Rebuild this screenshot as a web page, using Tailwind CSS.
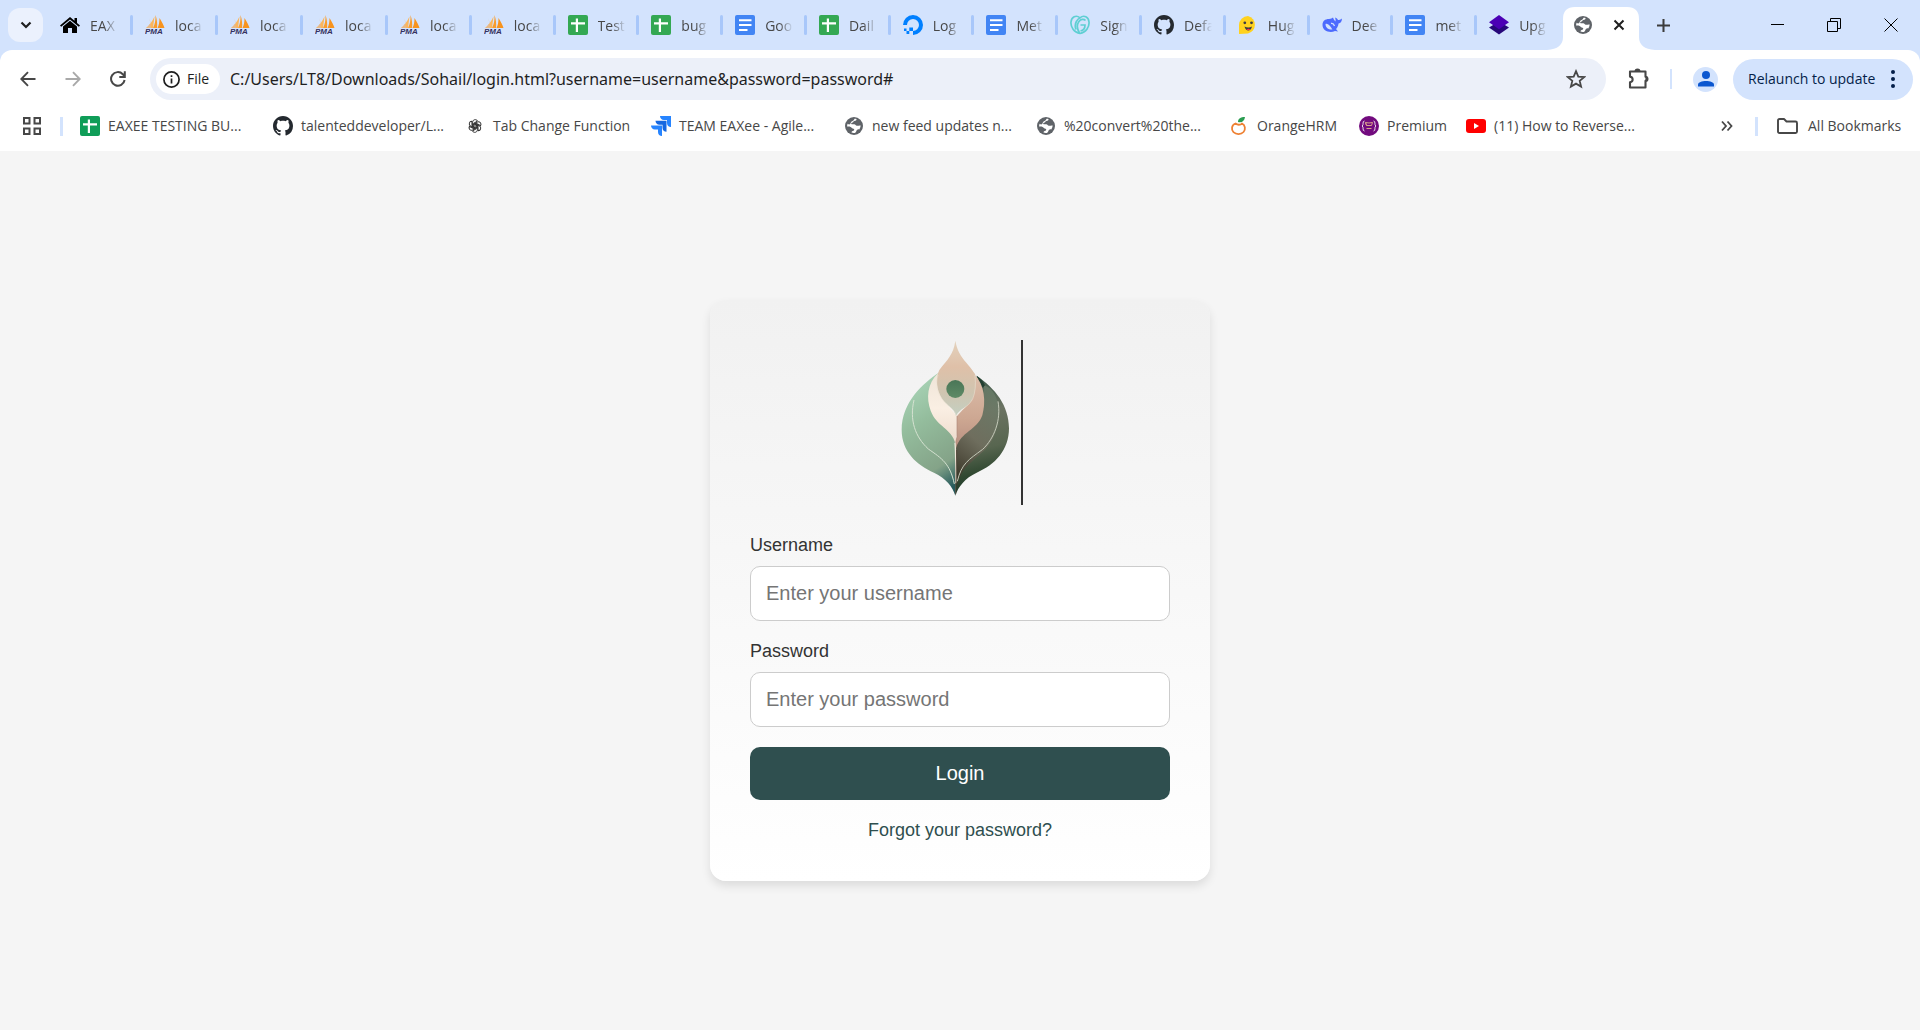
<!DOCTYPE html>
<html lang="en">
<head>
<meta charset="utf-8">
<title>Login</title>
<script src="https://cdn.jsdelivr.net/npm/@tailwindcss/browser@4"></script>
</head>
<body class="flex min-h-screen flex-col bg-[#f5f5f5] font-['Open_Sans','Noto_Sans',sans-serif] text-[#474747]">

<svg class="hidden" aria-hidden="true">
  <symbol id="pma" viewBox="0 0 20 20">
    <path d="M9.500 1.500 8 13H1C4 10.500 7 7 9.500 1.500z" fill="#fbb65c"/>
    <path d="M4.500 3 5.500 8 2 13H6z" fill="#e5b98b"/>
    <path d="M10.500 0c1.500 4 2 9 1.500 13H8C10 9 10.700 5 10.500 0z" fill="#f89c2d"/>
    <path d="M14.500 3c2 3 4 7 5 10h-7c1.500-3 2-6 2-10z" fill="#f7931e"/>
    <text x="0" y="19" class="font-['Liberation_Sans',sans-serif] text-[8px] font-bold italic" fill="#34315f">PMA</text>
  </symbol>
  <symbol id="sheet" viewBox="0 0 20 20">
    <rect width="20" height="20" rx="2" fill="currentColor"/>
    <path d="M8.900 3.500v13.500M3 8.400h14" stroke="#fff" stroke-width="2.200"/>
  </symbol>
  <symbol id="doc" viewBox="0 0 20 20">
    <rect width="20" height="20" rx="2" fill="#4285f4"/>
    <path d="M4 5.300h12.500M4 10h12.500M4 15h8.500" stroke="#fff" stroke-width="2"/>
  </symbol>
  <symbol id="github" viewBox="0 0 16 16">
    <path fill="#24292f" fill-rule="evenodd" d="M8 0C3.580 0 0 3.580 0 8c0 3.540 2.290 6.530 5.470 7.590.4.070.55-.17.55-.38 0-.19-.01-.82-.01-1.490-2.010.37-2.530-.49-2.690-.94-.09-.23-.48-.94-.82-1.130-.28-.15-.68-.52-.01-.53.63-.01 1.080.58 1.230.82.72 1.210 1.870.87 2.330.66.07-.52.28-.87.51-1.070-1.780-.2-3.640-.89-3.640-3.950 0-.87.31-1.590.82-2.150-.08-.2-.36-1.020.08-2.120 0 0 .67-.21 2.200.82.64-.18 1.320-.27 2-.27s1.360.09 2 .27c1.530-1.040 2.200-.82 2.200-.82.44 1.100.16 1.920.08 2.120.51.56.82 1.270.82 2.150 0 3.070-1.870 3.750-3.650 3.950.29.25.54.73.54 1.480 0 1.070-.01 1.930-.01 2.200 0 .21.15.46.55.38A8.010 8.010 0 0 0 16 8c0-4.420-3.580-8-8-8z"/>
  </symbol>
  <symbol id="globe" viewBox="0 0 20 20">
    <circle cx="10" cy="10" r="9" fill="#5f6368"/>
    <path d="M12.500 2.900c.3 1.400-.8 1.800-2.300 2-.9.100-.7 1.200-1.600 1.500-1 .3-1.700.600-1.300 1.500.4.800 1.800.300 2.900.3 1.400 0 1.500 1.200 2.600 1.500 1.100.3 2.100-.4 3.900-.1-.1 1.500-.6 2.700-1.400 3.800-.8-.2-1.700-.2-2.400.6-.8.900-.4 2.300-2 2.900-1.300.3-2.600.1-3.400-.3.1-1.200.9-1.700 2-1.900.9-.2 1-1.700 0-1.900-1.400-.2-1.800-1.300-2.900-1.900-1.100-.6-2.300-.4-3.500-.4 0-1.200.2-2 .5-2.800.8.300 1.200.9 2.200.6 1-.4.700-1.700 1.500-2.500.9-.8 2.700-.8 3.200-3 .800.0 1.400.0 2 .1z" fill="#fff"/>
  </symbol>
</svg>

<header class="h-[151px] shrink-0 bg-[#d3e3fd]">
  <div class="flex h-[50px] items-end">
    <div class="flex h-[50px] w-[46px] shrink-0 items-center pl-2">
      <button aria-label="Search tabs" class="flex h-[34px] w-[35px] items-center justify-center rounded-xl bg-[#ebf1fd]">
        <svg class="h-3 w-3" viewBox="0 0 12 12" fill="none" stroke="#1f1f1f" stroke-width="2.200"><path d="M1.500 3.500 6 8l4.500-4.500"/></svg>
      </button>
    </div>
    <nav id="tabs" aria-label="Tabs" class="flex h-[50px] w-[1513px] shrink-0 text-sm"></nav>
    <div class="relative flex h-[43px] w-[84px] shrink-0 items-center justify-between pr-[18px] pb-[7px] pl-[14px]">
      <svg class="absolute inset-0 h-full w-full overflow-visible" viewBox="0 0 84 43" preserveAspectRatio="none"><path d="M-12 43Q4 42 4 30V12Q4 0 16 0H68Q80 0 80 12V30Q80 42 96 43z" fill="#fff"/></svg>
      <svg class="relative h-5 w-5"><use href="#globe"/></svg>
      <button aria-label="Close tab" class="relative"><svg class="h-3 w-3" viewBox="0 0 12 12" stroke="#1f1f1f" stroke-width="2"><path d="m1.500 1.500 9 9M10.500 1.500l-9 9"/></svg></button>
    </div>
    <button aria-label="New tab" class="mb-[18px] ml-[14px]"><svg class="h-[13px] w-[13px]" viewBox="0 0 14 14" stroke="#3c3c3c" stroke-width="2.200"><path d="M7 0v14M0 7h14"/></svg></button>
    <div class="ml-auto flex h-[50px] items-center gap-[43px] pr-[22px]">
      <button aria-label="Minimize"><svg class="h-[14px] w-[14px]" viewBox="0 0 14 14" stroke="#000"><path d="M1 6.500h13"/></svg></button>
      <button aria-label="Restore"><svg class="h-[14px] w-[14px]" viewBox="0 0 14 14" fill="none" stroke="#000"><path d="M.5 3.500h10v10H.5zM3.500 3.500V.5h10v10h-3"/></svg></button>
      <button aria-label="Close"><svg class="h-[14px] w-[14px]" viewBox="0 0 14 14" stroke="#000"><path d="m.5.5 13 13M13.500.5l-13 13"/></svg></button>
    </div>
  </div>

  <div class="h-[101px] rounded-t-xl bg-white">
    <div class="flex h-[58px] items-center pr-[7px] pl-5">
      <button aria-label="Back"><svg class="h-4 w-4" viewBox="0 0 16 16" fill="none" stroke="#474747" stroke-width="1.900"><path d="M15.500 8H1.500M8 1.200 1.300 8 8 14.800"/></svg></button>
      <button aria-label="Forward" class="ml-[29px]"><svg class="h-4 w-4" viewBox="0 0 16 16" fill="none" stroke="#a9a9a9" stroke-width="1.900"><path d="M.5 8h14M8 1.200 14.700 8 8 14.800"/></svg></button>
      <button aria-label="Reload" class="ml-[29px]"><svg class="h-4 w-4" viewBox="0 0 16 16" fill="none" stroke="#474747" stroke-width="2"><path d="M14.600 9A6.800 6.800 0 1 1 12.800 3.200L14.500 5M14.800.3V6H9.300"/></svg></button>
      <div class="ml-6 flex h-[42px] flex-1 items-center rounded-full bg-[#ecf0f9] pr-5 pl-[6px]">
        <button class="flex h-[30px] w-16 shrink-0 items-center gap-[7px] rounded-full bg-white pl-[7px] text-sm font-medium text-[#1f1f1f]">
          <svg class="h-[17px] w-[17px]" viewBox="0 0 17 17" fill="none" stroke="#1f1f1f" stroke-width="1.700"><circle cx="8.500" cy="8.500" r="7.600"/><path d="M8.500 7.500v5M8.500 4.300v1.700"/></svg>File
        </button>
        <input aria-label="Address" class="ml-[10px] h-8 min-w-0 flex-1 bg-transparent font-['Noto_Sans',sans-serif] text-base text-[#1f1f1f] outline-none" value="C:/Users/LT8/Downloads/Sohail/login.html?username=username&amp;password=password#">
        <button aria-label="Bookmark this page"><svg class="h-5 w-5" viewBox="0 0 20 20" fill="none" stroke="#474747" stroke-width="1.800"><path d="m10 2.200 2.300 5.400 5.900.5-4.500 3.800 1.400 5.700-5.100-3-5.100 3 1.400-5.700L1.800 8.100l5.900-.5z"/></svg></button>
      </div>
      <button aria-label="Extensions" class="ml-[21px]"><svg class="h-[22px] w-[22px]" viewBox="0 0 22 22"><path d="M3 3.500h15.500v5.200c2 .2 2 4 0 4.200v6.600H3v-5.200c3.500-.8 3.500-5 0-5.700z" fill="none" stroke="#474747" stroke-width="2.100" stroke-linejoin="round"/><path d="M7.500 3.500a3 3 0 0 1 6 0zM18.500 8a3 3 0 0 1 0 6z" fill="#474747"/></svg></button>
      <span class="ml-[21px] h-5 w-[2px] bg-[#d3e3fd]"></span>
      <button aria-label="Profile" class="ml-[21px] flex h-[25px] w-[25px] items-center justify-center rounded-full bg-[#d3e3fd]"><svg class="h-4 w-4" viewBox="0 0 16 16" fill="#0b57d0"><circle cx="8" cy="4" r="4"/><path d="M0 15.500v-2C0 8.800 16 8.800 16 13.500v2z"/></svg></button>
      <button class="ml-[15px] flex h-[41px] w-[180px] items-center justify-between rounded-full bg-[#d3e3fd] pr-[18px] pl-[15px] text-sm font-normal whitespace-nowrap text-[#041e49]">
        Relaunch to update
        <svg class="h-[18px] w-1" viewBox="0 0 4 18" fill="#041e49"><circle cx="2" cy="2" r="2"/><circle cx="2" cy="9" r="2"/><circle cx="2" cy="16" r="2"/></svg>
      </button>
    </div>

    <nav aria-label="Bookmarks" class="flex h-9 items-center pr-[18px] pl-[23px] text-sm whitespace-nowrap">
      <button aria-label="Apps"><svg class="h-[18px] w-[18px]" viewBox="0 0 18 18" fill="none" stroke="#474747" stroke-width="2"><path d="M1 1h5.500v5.500H1zM11.500 1H17v5.500h-5.500zM1 11.500h5.500V17H1zM11.500 11.500H17V17h-5.500z"/></svg></button>
      <span class="ml-[19px] h-[19px] w-[3px] bg-[#d3e3fd]"></span>
      <a href="#" class="ml-[17px] flex w-[193px] items-center gap-2"><svg class="h-5 w-5 shrink-0 text-[#0f9d58]"><use href="#sheet"/></svg>EAXEE TESTING BU...</a>
      <a href="#" class="flex w-[192px] items-center gap-2"><svg class="h-5 w-5 shrink-0"><use href="#github"/></svg>talenteddeveloper/L...</a>
      <a href="#" class="flex w-[186px] items-center gap-2"><svg class="h-5 w-5 shrink-0" viewBox="-2 -2 24 24" fill="none" stroke="#333" stroke-width="1.200"><path id="loop" d="M7.200 12V5.500C7.200 2.200 11.500 1.200 13 4L8.500 6.700V11"/><use href="#loop" transform="rotate(60 10 10)"/><use href="#loop" transform="rotate(120 10 10)"/><use href="#loop" transform="rotate(180 10 10)"/><use href="#loop" transform="rotate(240 10 10)"/><use href="#loop" transform="rotate(300 10 10)"/></svg>Tab Change Function</a>
      <a href="#" class="flex w-[193px] items-center gap-2"><svg class="h-5 w-5 shrink-0" viewBox="0 0 20 20"><path d="M9 0h11v11c-2.300 0-4-1.500-4-4V4h-3C10.500 4 9 2.300 9 0z" fill="#2684ff"/><path d="M4.500 4.800h11v11c-2.300 0-4-1.500-4-4v-3h-3c-2.500 0-4-1.700-4-4z" fill="#1668e0"/><path d="M0 9.500h11V20c-2.300 0-4-1.500-4-4v-2.500H4c-2.500 0-4-1.700-4-4z" fill="#2684ff"/></svg>TEAM EAXee - Agile...</a>
      <a href="#" class="flex w-[192px] items-center gap-2"><svg class="h-5 w-5 shrink-0"><use href="#globe"/></svg>new feed updates n...</a>
      <a href="#" class="flex w-[193px] items-center gap-2"><svg class="h-5 w-5 shrink-0"><use href="#globe"/></svg>%20convert%20the...</a>
      <a href="#" class="flex w-[130px] items-center gap-2"><svg class="h-5 w-5 shrink-0" viewBox="0 0 20 20"><path d="M6.500 7.500C2.500 9 2 13.500 4.500 16.200c2.800 2.600 7.500 2.400 10-.2 2.300-2.800 1.800-6.800-1.500-8.500-1.500 1.600-4.500 1.700-6.500 0z" fill="none" stroke="#ee8133" stroke-width="1.800"/><path d="M9 6c0-3.500 2.500-5 7-5-.5 4-3 6-7 5z" fill="#2a9d51"/></svg>OrangeHRM</a>
      <a href="#" class="flex w-[107px] items-center gap-2"><svg class="h-5 w-5 shrink-0" viewBox="0 0 20 20"><circle cx="10" cy="10" r="10" fill="#720b7e"/><path d="M5.500 5C3 5 5 9 3.200 10 5 11 3 15 5.500 15M14.500 5C17 5 15 9 16.800 10 15 11 17 15 14.500 15" fill="none" stroke="#eadbea"/><path d="m6.500 6.500 3.500.5 3.500-.5-1 3h-5zM7.500 9.500l-1-3M7.500 12.500h5" fill="none" stroke="#d9a08a"/></svg>Premium</a>
      <a href="#" class="flex items-center gap-2"><svg class="h-5 w-5 shrink-0" viewBox="0 0 20 20"><rect y="3" width="20" height="14" rx="3" fill="#f00"/><path d="m8 7 5 3-5 3z" fill="#fff"/></svg>(11) How to Reverse...</a>
      <button aria-label="More bookmarks" class="ml-auto"><svg class="h-3 w-3" viewBox="0 0 12 12" fill="none" stroke="#474747" stroke-width="1.800"><path d="m1 1.500 4 4.500-4 4.500M6.500 1.500l4 4.500-4 4.500"/></svg></button>
      <span class="ml-[22px] h-[19px] w-[3px] bg-[#d3e3fd]"></span>
      <a href="#" class="ml-[19px] flex w-[125px] items-center gap-[10px]"><svg class="h-4 w-[21px] shrink-0" viewBox="0 0 21 16" fill="none" stroke="#474747" stroke-width="1.900" stroke-linejoin="round"><path d="M1 2.500Q1 1 2.500 1H7l2.500 2.500h9Q20 3.500 20 5v8.500q0 1.500-1.500 1.500h-16Q1 15 1 13.500z"/></svg>All Bookmarks</a>
    </nav>
  </div>
</header>

<main class="flex flex-1 items-center justify-center font-['Liberation_Sans',Arial,sans-serif]">
  <form class="flex w-full max-w-[500px] flex-col rounded-2xl bg-linear-to-b from-[#f1f1f1] to-white p-10 text-lg/[21px] text-[#333] shadow-[0_5px_10px_rgba(0,0,0,0.1)]">
    <div class="mb-[30px] self-center border-r-2 border-[#333]">
      <svg class="block h-[165px] w-[124px]" viewBox="111 60 372 495" role="img" aria-label="Logo">
        <defs>
          <linearGradient id="gl" x1=".4" y1="0" x2=".7" y2="1"><stop offset="0" stop-color="#a9d4b7"/><stop offset=".35" stop-color="#94bd9d"/><stop offset=".78" stop-color="#84a388"/><stop offset="1" stop-color="#265a5c"/></linearGradient>
          <linearGradient id="gr" x1=".5" y1="0" x2=".6" y2="1"><stop offset="0" stop-color="#3c5948"/><stop offset=".3" stop-color="#6b7362"/><stop offset=".6" stop-color="#586650"/><stop offset=".8" stop-color="#304831"/><stop offset="1" stop-color="#17372b"/></linearGradient>
          <linearGradient id="gi" x1=".7" y1="0" x2=".3" y2="1"><stop offset="0" stop-color="#6a7d69"/><stop offset=".55" stop-color="#736f60"/><stop offset="1" stop-color="#3e3428"/></linearGradient>
          <linearGradient id="gt" x1="0" y1="0" x2="0" y2="1"><stop offset="0" stop-color="#e3d2bd"/><stop offset=".35" stop-color="#dfc0a8"/><stop offset=".7" stop-color="#cfc5b1"/><stop offset="1" stop-color="#c4d0c2"/></linearGradient>
          <linearGradient id="gc" x1="0" y1="0" x2="0" y2="1"><stop offset="0" stop-color="#efe5d8"/><stop offset=".5" stop-color="#faefe3"/><stop offset="1" stop-color="#eedbcd"/></linearGradient>
          <linearGradient id="gp" x1="0" y1="0" x2="0" y2="1"><stop offset="0" stop-color="#ddbfab"/><stop offset=".6" stop-color="#cda792"/><stop offset="1" stop-color="#b88f80"/></linearGradient>
          <linearGradient id="gd" x1="0" y1="0" x2="0" y2="1"><stop offset="0" stop-color="#4a7657"/><stop offset="1" stop-color="#5e8a66"/></linearGradient>
        </defs>
        <path d="M236 158C190 190 125 245 125 330C125 395 170 435 222 458C258 475 278 500 286 527L290 370L236 250z" fill="url(#gl)"/>
        <path d="M350 167C405 205 447 255 447 325C447 390 405 435 350 458C315 474 295 500 286 527L288 370L372 260z" fill="url(#gr)"/>
        <path d="M372 195C402 205 417 240 416 280C412 365 375 390 335 425C312 445 300 460 290 500L289 372L365 290z" fill="url(#gi)" opacity=".8"/>
        <path d="M349 167Q366 176 375 196L368 203Q360 184 349 167z" fill="#223f31"/>
        <path d="M234 160C202 190 198 235 212 272C230 320 275 325 286 370Q292 362 292 290L250 240z" fill="url(#gc)"/>
        <path d="M342 162C375 195 378 245 367 286C352 330 302 335 288 385Q286 360 291 352V288L335 240z" fill="url(#gp)"/>
        <path d="M286 62C280 105 262 118 238 150C225 175 230 210 246 236C260 258 282 262 288 288C300 264 325 264 338 235C350 205 349 180 345 162C320 122 296 115 286 62z" fill="url(#gt)"/>
        <path d="M234 165C225 195 233 222 248 239C262 258 284 267 289 288C300 268 325 262 338 237C346 218 348 195 345 166" fill="none" stroke="#eee2d3" stroke-width="2" opacity=".8"/>
        <path d="M291 288V350Q286 366 287 382" fill="none" stroke="#b18a78" stroke-width="2"/>
        <path d="M285 368Q288 400 287 490" fill="none" stroke="#efe7da" stroke-width="4"/>
        <path d="M290 390L287 522" fill="none" stroke="#4a3a2d" stroke-width="2"/>
        <path d="M162 240C148 300 165 350 205 387C245 415 270 430 283 492" fill="none" stroke="#d5e2d1" stroke-width="3"/>
        <path d="M414 244C424 300 403 355 368 388C325 420 305 430 292 484" fill="none" stroke="#c3c9b8" stroke-width="3"/>
        <circle cx="286" cy="207" r="27" fill="url(#gd)"/>
      </svg>
    </div>
    <label for="username" class="mb-[10px]">Username</label>
    <input id="username" name="username" placeholder="Enter your username" class="mb-5 h-[55px] rounded-[10px] border border-[#ccc] bg-white px-[15px] text-xl placeholder:text-[#757575]">
    <label for="password" class="mb-[10px]">Password</label>
    <input id="password" name="password" type="password" placeholder="Enter your password" class="mb-5 h-[55px] rounded-[10px] border border-[#ccc] bg-white px-[15px] text-xl placeholder:text-[#757575]">
    <button class="mb-5 h-[53px] rounded-[10px] bg-[#2f4f4f] pb-[2px] text-xl text-white">Login</button>
    <a href="#" class="self-center text-[#2f4f4f]">Forgot your password?</a>
  </form>
</main>

<script>
  const use = (id, cls = '') => `<svg class="h-5 w-5 shrink-0 ${cls}"><use href="#${id}"/></svg>`;
  const svg = (body) => `<svg class="h-5 w-5 shrink-0" viewBox="0 0 20 20">${body}</svg>`;
  const pma = use('pma'), sheet = use('sheet', 'text-[#34a853]'), doc = use('doc');
  const tabs = [
    [svg('<path d="M10 2 0 10.500l1.200 1.300L10 4.400l8.800 7.400 1.200-1.300-3-2.600V3h-2.500v2.800z"/><path d="M3 11.500 10 5.700l7 5.800V18h-5v-5H8v5H3z"/>'), 'EAX'],
    [pma, 'loca'], [pma, 'loca'], [pma, 'loca'], [pma, 'loca'], [pma, 'loca'],
    [sheet, 'Test'], [sheet, 'bug'], [doc, 'Goo'], [sheet, 'Dail'],
    [svg('<path d="M10 18a8 8 0 1 0-8-8" fill="none" stroke="#0080ff" stroke-width="4"/><path d="M6.300 12.500H10V16H6.300zM3.500 16h2.800v3H3.500zM1 13.500h2.500V16H1z" fill="#0080ff"/>'), 'Log'],
    [doc, 'Met'],
    [svg('<path d="M10 18.500C4 17.500.5 12 1 7c.4-5 5-7.500 9-4.200 4-3.300 8.600-.8 9 4.200.5 5-3 10.500-9 11.500zM6 14.500C3.500 8 8 3.500 10.500 2.800M9.500 18C3.500 8 12 1.500 15.500 5.500M10.500 10H15c0 3.500-2 5.500-4.500 6" fill="none" stroke="#5fcfd3" stroke-width="1.700"/>'), 'Sign'],
    [use('github'), 'Defa'],
    [svg('<path d="M10 1a9 9 0 0 1 0 17.500L1 19V10a9 9 0 0 1 9-9z" fill="#ffd21e"/><path d="M6.500 11.500q4 2 7.500 0-1 4-3.700 4t-3.800-4z" fill="#3a3b45"/><path d="M8.500 14.500q2-1.500 3.800 0-2 1.500-3.800 0z" fill="#f34"/><circle cx="6.800" cy="7.800" r="1.400" fill="#3a3b45"/><circle cx="13.500" cy="7.800" r="1.400" fill="#3a3b45"/>'), 'Hug'],
    [svg('<path d="M.5 10C.5 6 3 4 7 4c2 0 3-1 4-1.500.5 1.500 1 2.500 2.500 4 .2-2 0-2.500-.5-4 1.700.7 2.500 1.200 3 2.500 1.200 0 2.500-.5 4-1.500-.2 3-1.200 4.500-3.500 5-.3 2.300-1 4.200-2.500 5.500l2 2.500-3-.5C8 18.500.5 16 .5 10z" fill="#4d6bfe"/><path d="M3.500 9c3-1 5.500 3.500 7 5.500-3.500.5-7-1.500-7-5.500z" fill="#d3e3fd"/><path d="M9 8.500q2.500-.5 3.500 2.500" fill="none" stroke="#d3e3fd" stroke-width="1.300"/>'), 'Dee'],
    [doc, 'met'],
    [svg('<path d="m0 12.500 10-6 10 6-10 7z" fill="#27087a"/><path d="M10 0 20 7.300l-10 7-10-7z" fill="#4b00b5"/>'), 'Upg'],
  ];
  document.getElementById('tabs').innerHTML = tabs.map(([icon, title], i) => `
    <a href="#" class="relative flex items-center gap-[10px] pl-[14px] ${i < 4 ? 'w-[85px] shrink-0' : 'min-w-0 flex-1'}">
      ${icon}<span class="w-7 overflow-hidden mask-r-from-50% pt-px whitespace-nowrap">${title}</span>
      ${i < 17 ? '<span class="absolute right-[-2px] h-5 w-[3px] rounded-full bg-[#a8c7fa]"></span>' : ''}
    </a>`).join('');
</script>
</body>
</html>
